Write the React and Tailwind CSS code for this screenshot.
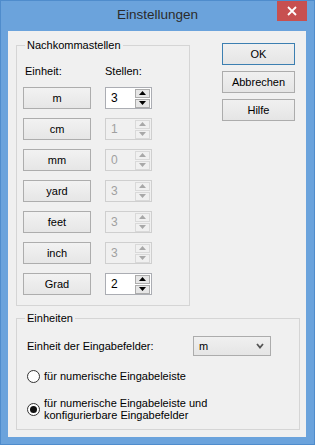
import React from 'react';

const font = { fontFamily: '"Liberation Sans", Arial, sans-serif' };

function SpinArrow({ up, disabled }) {
  return (
    <div
      className={`flex h-[9px] w-[15px] items-center justify-center border ${
        disabled ? 'border-[#d9d9d9] bg-[#f0f0f0]' : 'border-[#acacac] bg-[#e6e6e6]'
      }`}
    >
      <svg width="7" height="4" viewBox="0 0 7 4">
        <polygon
          points={up ? '3.5,0 7,4 0,4' : '0,0 7,0 3.5,4'}
          fill={disabled ? '#a8a8a8' : '#000'}
        />
      </svg>
    </div>
  );
}

function Spin({ value, disabled }) {
  return (
    <div
      className={`flex h-[22px] w-[47px] items-stretch border ${
        disabled ? 'border-[#cfcfcf] bg-[#f0f0f0]' : 'border-[#abadb3] bg-white'
      }`}
    >
      <span
        className={`flex flex-1 items-center pl-[5px] text-[12px] ${
          disabled ? 'text-[#a0a0a0]' : 'text-black'
        }`}
      >
        {value}
      </span>
      <div className="flex flex-col justify-center gap-[1px] pr-[1px]">
        <SpinArrow up disabled={disabled} />
        <SpinArrow disabled={disabled} />
      </div>
    </div>
  );
}

function UnitRow({ unit, value, disabled }) {
  return (
    <div className="flex items-center gap-[14px]">
      <div className="flex h-[22px] w-[68px] items-center justify-center border border-[#adadad] bg-gradient-to-b from-[#f2f2f2] to-[#e6e6e6] text-[11px] text-black">
        {unit}
      </div>
      <Spin value={value} disabled={disabled} />
    </div>
  );
}

function DialogButton({ children, primary }) {
  return (
    <div
      className={`flex h-[22px] w-[73px] items-center justify-center border bg-gradient-to-b from-[#f0f0f0] to-[#e5e5e5] text-[11px] text-black ${
        primary ? 'border-[#3c7fb1]' : 'border-[#acacac]'
      }`}
    >
      {children}
    </div>
  );
}

function Radio({ checked }) {
  return (
    <div className="flex h-[13px] w-[13px] shrink-0 items-center justify-center rounded-full border border-[#333] bg-white">
      {checked && <div className="h-[7px] w-[7px] rounded-full bg-[#111]" />}
    </div>
  );
}

const rows = [
  { unit: 'm', value: 3 },
  { unit: 'cm', value: 1, disabled: true },
  { unit: 'mm', value: 0, disabled: true },
  { unit: 'yard', value: 3, disabled: true },
  { unit: 'feet', value: 3, disabled: true },
  { unit: 'inch', value: 3, disabled: true },
  { unit: 'Grad', value: 2 },
];

export default function App() {
  return (
    <div
      className="flex h-[445px] w-[315px] flex-col border border-[#4f8ccc] bg-[#6ba3dc]"
      style={font}
    >
      {/* Title bar */}
      <div className="grid h-[30px] shrink-0 grid-cols-[1fr_auto_1fr]">
        <div />
        <div className="flex items-center pb-[2px] text-[13.5px] text-[#2b2b2b]">Einstellungen</div>
        <div className="flex justify-end pr-[7px]">
          <div className="flex h-[20px] w-[30px] items-center justify-center bg-[#c75050]">
            <svg width="10" height="10" viewBox="0 0 10 10">
              <path d="M1 1 L9 9 M9 1 L1 9" stroke="#fff" strokeWidth="1.8" />
            </svg>
          </div>
        </div>
      </div>

      {/* Client area */}
      <div className="ml-[7px] mr-[8px] mb-[7px] flex flex-1 flex-col bg-[#f0f0f0] pt-[8px] text-[11px] text-black">
        <div className="flex items-start">
          <fieldset className="ml-[8px] w-[174px] border border-[#d5d5d5] pb-[10px] pl-[6px]">
            <legend className="ml-[2px] px-[2px] leading-[13px]">Nachkommastellen</legend>
            <div className="mt-[13px] flex h-[13px] items-center leading-[13px]">
              <span className="ml-[2px] w-[80px]">Einheit:</span>
              <span>Stellen:</span>
            </div>
            <div className="mt-[9px] flex flex-col gap-[9px]">
              {rows.map(r => (
                <UnitRow key={r.unit} {...r} />
              ))}
            </div>
          </fieldset>

          <div className="ml-[32px] mt-[4px] flex flex-col gap-[6px]">
            <DialogButton primary>OK</DialogButton>
            <DialogButton>Abbrechen</DialogButton>
            <DialogButton>Hilfe</DialogButton>
          </div>
        </div>

        <fieldset className="ml-[8px] mt-[6px] w-[284px] border border-[#d5d5d5] pb-[8px] pl-[10px]">
          <legend className="ml-[-2px] px-[2px] leading-[13px]">Einheiten</legend>
          <div className="mt-[11px] flex h-[20px] items-center">
            <span className="w-[166px]">Einheit der Eingabefelder:</span>
            <div className="flex h-[20px] w-[78px] items-center justify-between border border-[#acacac] bg-gradient-to-b from-[#f0f0f0] to-[#e5e5e5] pl-[5px] pr-[6px]">
              <span>m</span>
              <svg width="8" height="6" viewBox="0 0 8 6">
                <path d="M1 1 L4 4.5 L7 1" stroke="#555" strokeWidth="1.8" fill="none" />
              </svg>
            </div>
          </div>
          <div className="mt-[14px] flex h-[13px] items-center gap-[4px]">
            <Radio />
            <span className="leading-[13px]">für numerische Eingabeleiste</span>
          </div>
          <div className="mt-[14px] flex items-center gap-[4px]">
            <Radio checked />
            <span className="leading-[12px]">
              für numerische Eingabeleiste und
              <br />
              konfigurierbare Eingabefelder
            </span>
          </div>
        </fieldset>
      </div>
    </div>
  );
}
